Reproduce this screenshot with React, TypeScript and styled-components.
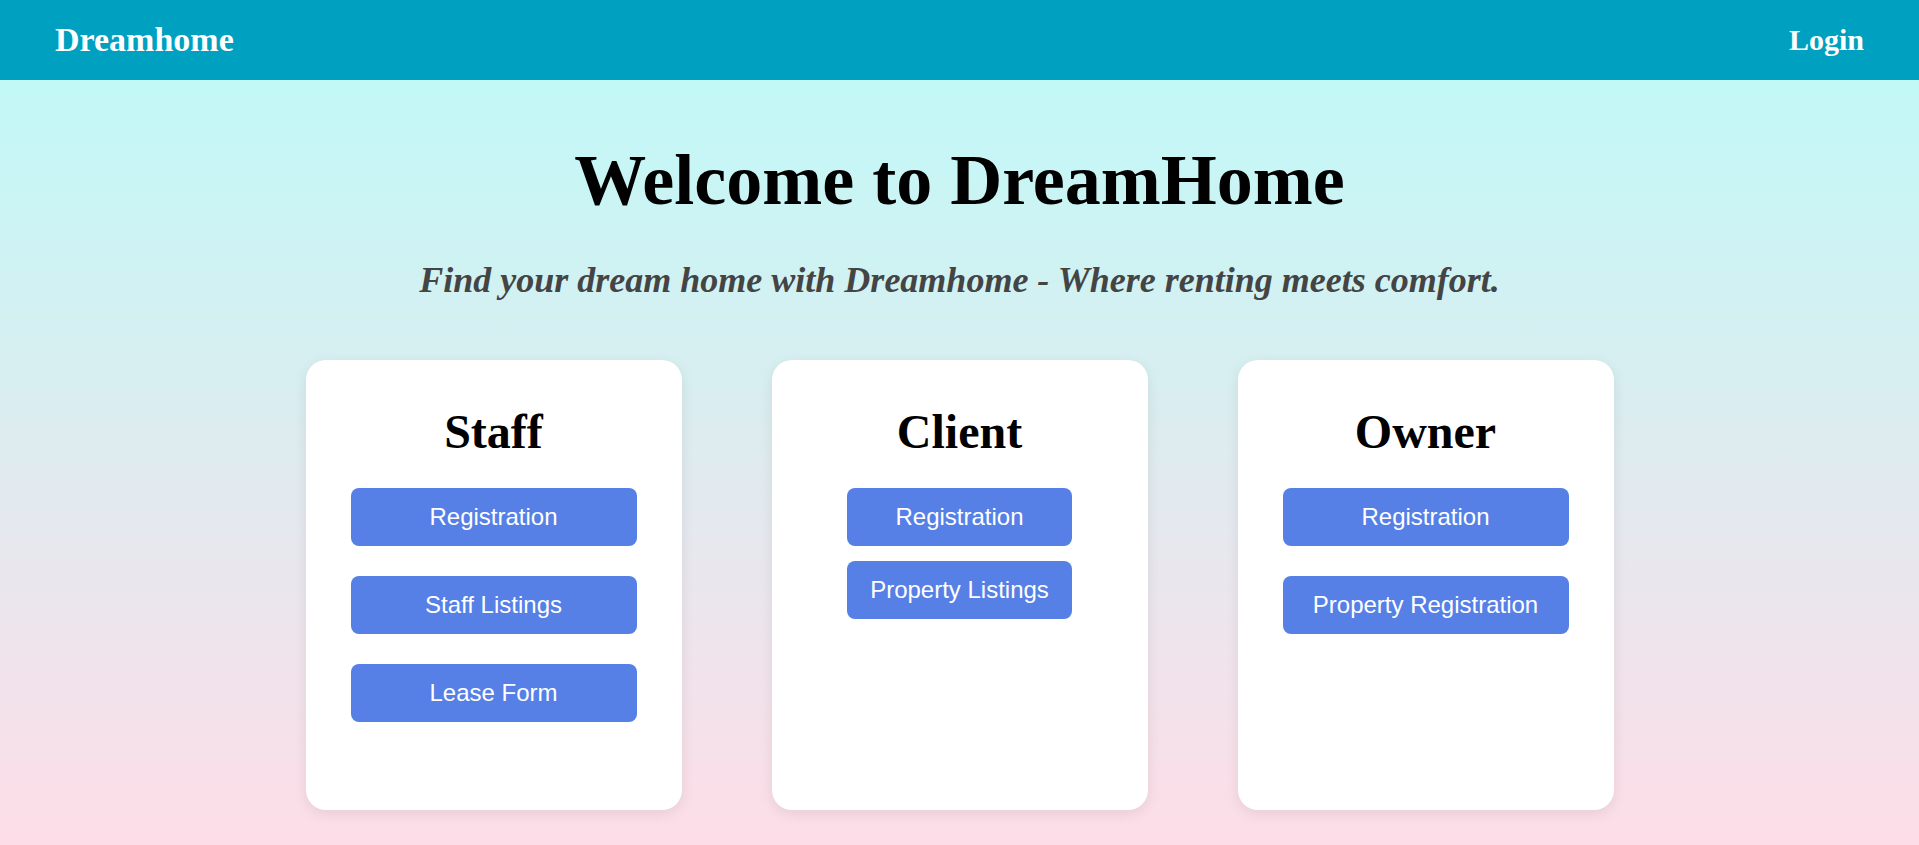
import React from "react";
import styled, { createGlobalStyle } from "styled-components";

const GlobalStyle = createGlobalStyle`
  html, body {
    margin: 0;
    padding: 0;
  }
  body {
    font-family: "Liberation Serif", "Times New Roman", serif;
    min-height: 100vh;
    background: linear-gradient(180deg, #bcfbf9 0%, #d8eef0 45%, #ebe6ee 70%, #fddde7 100%);
    background-attachment: fixed;
  }
`;

const Page = styled.div`
  min-height: 100vh;
  display: flex;
  flex-direction: column;
`;

const Header = styled.header`
  height: 80px;
  background: #00a0c0;
  display: flex;
  align-items: center;
  justify-content: space-between;
  padding: 0 55px;
  box-sizing: border-box;
  color: #fff;
  font-weight: bold;
`;

const Brand = styled.div`
  font-size: 34px;
  line-height: 1;
`;

const LoginLink = styled.a`
  font-size: 30px;
  line-height: 1;
  color: #fff;
  text-decoration: none;
`;

const Main = styled.main`
  display: flex;
  flex-direction: column;
  align-items: center;
  padding-top: 59px;
`;

const Title = styled.h1`
  margin: 0;
  font-size: 72px;
  font-weight: bold;
  color: #000;
  line-height: normal;
`;

const Subtitle = styled.p`
  margin: 37px 0 0;
  font-size: 36px;
  font-weight: bold;
  font-style: italic;
  color: #444;
  line-height: normal;
`;

const CardRow = styled.div`
  display: flex;
  gap: 90px;
  margin-top: 59px;
`;

const Card = styled.section`
  width: 376px;
  height: 450px;
  box-sizing: border-box;
  background: #fff;
  border-radius: 20px;
  box-shadow: 0 4px 14px rgba(0, 0, 0, 0.08);
  padding: 44px 45px 0;
  display: flex;
  flex-direction: column;
  align-items: center;
`;

const CardTitle = styled.h2`
  margin: 0 0 29px;
  font-size: 48px;
  font-weight: bold;
  line-height: normal;
  color: #000;
`;

const ButtonStack = styled.div<{ $gap: number; $fill: boolean }>`
  display: flex;
  flex-direction: column;
  gap: ${(p) => p.$gap}px;
  align-items: stretch;
  width: ${(p) => (p.$fill ? "100%" : "auto")};
`;

const ActionButton = styled.button`
  font-family: "Liberation Sans", Arial, sans-serif;
  font-size: 24px;
  line-height: 28px;
  color: #fff;
  background: #5680e6;
  border: none;
  border-radius: 8px;
  padding: 15px 23px;
  height: 58px;
  box-sizing: border-box;
  cursor: pointer;
  white-space: nowrap;
`;

const cards = [
  { title: "Staff", gap: 30, fill: true, items: ["Registration", "Staff Listings", "Lease Form"] },
  { title: "Client", gap: 15, fill: false, items: ["Registration", "Property Listings"] },
  { title: "Owner", gap: 30, fill: true, items: ["Registration", "Property Registration"] },
];

export default function App() {
  return (
    <>
      <GlobalStyle />
      <Page>
        <Header>
          <Brand>Dreamhome</Brand>
          <LoginLink href="#">Login</LoginLink>
        </Header>
        <Main>
          <Title>Welcome to DreamHome</Title>
          <Subtitle>Find your dream home with Dreamhome - Where renting meets comfort.</Subtitle>
          <CardRow>
            {cards.map((c) => (
              <Card key={c.title}>
                <CardTitle>{c.title}</CardTitle>
                <ButtonStack $gap={c.gap} $fill={c.fill}>
                  {c.items.map((it) => (
                    <ActionButton key={it}>{it}</ActionButton>
                  ))}
                </ButtonStack>
              </Card>
            ))}
          </CardRow>
        </Main>
      </Page>
    </>
  );
}
